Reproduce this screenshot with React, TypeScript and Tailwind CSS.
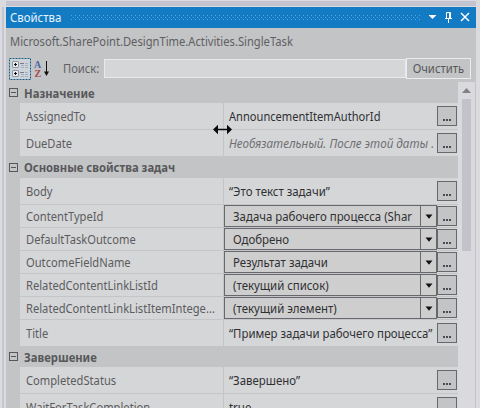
import React from "react";

type Kind = "text" | "combo" | "hint";
type Item = { name: string; value: string; kind?: Kind; valueCls?: string };

const cyr = "scale-x-[.952]";
const lat = "scale-x-[.93]";

function Dots({ cls = "" }: { cls?: string }) {
  return (
    <button className={`flex h-5 w-5 shrink-0 items-start justify-center gap-px border border-[#66686b] bg-[#c2c4c6] pt-[12px] ${cls}`}>
      <span className="h-[2px] w-[2px] bg-[#4a4c55]" />
      <span className="h-[2px] w-[2px] bg-[#4a4c55]" />
      <span className="h-[2px] w-[2px] bg-[#4a4c55]" />
    </button>
  );
}

function Row({ item, last }: { item: Item; last?: boolean }) {
  const combo = item.kind === "combo";
  return (
    <div className={`flex shrink-0 ${combo ? "h-[23px]" : last ? "h-[26px]" : "h-[27px]"} ${last ? "" : "border-b border-[#c3c5c8]"} bg-[#d5d6d8]`}>
      <div className="flex w-[204px] shrink-0 items-center overflow-hidden border-r border-[#c3c5c8] pl-[6px] pt-[2px] text-[#5c5c5e]">
        <span className={`inline-block shrink-0 origin-left ${lat}`}>{item.name}</span>
      </div>
      {combo ? (
        <div className="flex h-[22px] w-[213px] shrink-0 border border-[#66686b] bg-[#cecece] text-[#303033]">
          <div className="flex w-[196px] items-center overflow-hidden border-r border-[#66686b] pl-[8px] pt-[2px]">
            <span className={`inline-block shrink-0 origin-left ${item.valueCls ?? cyr}`}>{item.value}</span>
          </div>
          <div className="flex flex-1 items-center justify-center">
            <svg width="8" height="5" viewBox="0 0 8 5"><path d="M0.5 0.5h7L4 4.7z" fill="#111" /></svg>
          </div>
        </div>
      ) : (
        <div className={`flex w-[213px] shrink-0 items-center overflow-hidden pl-[5px] pt-[2px] ${item.kind === "hint" ? "italic text-[#707074]" : "text-[#303033]"}`}>
          <span className={`inline-block shrink-0 origin-left ${item.valueCls ?? cyr}`}>{item.value}</span>
        </div>
      )}
      <Dots cls={combo ? "mt-px" : "mt-[3px]"} />
    </div>
  );
}

function Group({ title, h, items }: { title: string; h: string; items: Item[] }) {
  return (
    <section className="shrink-0">
      <header className={`flex items-center ${h}`}>
        <span className="ml-[3px] flex h-[9px] w-[9px] items-center justify-center border border-[#55575a]">
          <span className="h-px w-[5px] bg-[#55575a]" />
        </span>
        <span className="ml-[6px] inline-block origin-left scale-x-[.94] pt-[2px] font-bold text-[#58585a]">{title}</span>
      </header>
      <div className="ml-[14px]">
        {items.map((it, i) => (
          <Row key={it.name} item={it} last={i === items.length - 1} />
        ))}
      </div>
    </section>
  );
}

export default function App() {
  return (
    <div className="flex h-[408px] w-[480px] flex-col overflow-hidden whitespace-nowrap bg-[#dadadf] font-['Noto_Sans','Liberation_Sans',sans-serif] text-[12px] leading-4">
      <div className="flex h-[7px] shrink-0 flex-col">
        <div className="h-px bg-[#dadadf]" />
        <div className="ml-[6px] mr-1 h-[5px] bg-[#c3c3cf]" />
      </div>
      <div className="flex min-h-0 flex-1">
        <div className="w-[6px] shrink-0 pl-[2px]"><div className="h-full w-[2px] bg-[#c6c6d2]" /></div>
        <main className="flex w-[470px] flex-col overflow-hidden bg-[#c3c4c6]">
          <div className="flex h-[21px] shrink-0 items-center bg-[#127bc4] text-[#e9f3fa]">
            <span className="w-16 shrink-0 pl-1"><span className="inline-block origin-left scale-x-[.95]">Свойства</span></span>
            <svg width="359" height="6" className="shrink-0" viewBox="64 0 359 6">
              <defs>
                <pattern id="grip" width="4" height="4" patternUnits="userSpaceOnUse">
                  <rect x="1" y="0" width="1" height="1" fill="#55a8df" />
                  <rect x="3" y="2" width="1" height="1" fill="#55a8df" />
                </pattern>
              </defs>
              <rect x="64" width="350" height="5" fill="url(#grip)" />
            </svg>
            <svg width="46" height="21" viewBox="0 0 46 21" className="shrink-0">
              <path d="M-0.5 8h8L3.5 12z" fill="#fff" />
              <path d="M17.5 11.5v-6h4v6M16 11.5h7M19.5 12v4M20.5 5.5v6" fill="none" stroke="#fff" />
              <path d="M32 6l8 8M40 6l-8 8" stroke="#fff" strokeWidth="1.5" />
            </svg>
          </div>
          <div className="flex h-[28px] shrink-0 items-center pl-1 text-[#606062]"><span className="inline-block origin-left scale-x-[.932]">Microsoft.SharePoint.DesignTime.Activities.SingleTask</span></div>
          <div className="flex h-[26px] shrink-0 items-start pt-[2px]">
            <svg width="44" height="22" viewBox="0 0 44 22" className="ml-[3px] shrink-0">
              <rect x="0.5" y="0.5" width="21" height="21" fill="#cdd3d8" />
              <rect x="0.5" y="0.5" width="21" height="21" fill="none" stroke="#1b5f88" strokeDasharray="2 1" />
              <g fill="#e8eaec" stroke="#8b98a5"><rect x="3.5" y="3.5" width="6" height="6" rx="0.5" /><rect x="3.5" y="12.5" width="6" height="6" rx="0.5" /></g>
              <path d="M5 6.5h3M6.5 5v3M5 15.5h3M6.5 14v3" stroke="#111" />
              <path d="M11 5.5h4M11 14.5h4" stroke="#777c88" />
              <path d="M12 7.5h3M16 5.5h3M16 7.5h3M12 9.5h3M16 9.5h3M12 16.5h3M16 14.5h3M16 16.5h3M12 18.5h3M16 18.5h3" stroke="#a3b1c2" />
              <text x="25" y="10" fontFamily="Liberation Serif" fontWeight="bold" fontSize="10" fill="#4a68a3">A</text>
              <text x="25.5" y="18.5" fontFamily="Liberation Serif" fontWeight="bold" fontSize="10" fill="#a84850">Z</text>
              <path d="M37.5 3v12" stroke="#111" /><path d="M35 13.5h5L37.5 18z" fill="#111" />
            </svg>
            <span className="w-[51px] shrink-0 pl-[10px] pt-[3px] text-[#606062]"><span className="inline-block origin-left scale-x-[.93]">Поиск:</span></span>
            <div className="mt-px h-[19px] w-[302px] shrink-0 border border-[#e8e9eb] bg-[#d5d6d8]" />
            <button className="flex h-[21px] w-[65px] items-center justify-center border border-[#ececee] pt-px text-[#58585a]"><span className="inline-block scale-x-[.94]">Очистить</span></button>
          </div>
          <div className="flex min-h-0 flex-1">
            <div className="flex w-[452px] shrink-0 flex-col overflow-hidden">
              <Group title="Назначение" h="h-[21px]" items={[
                { name: "AssignedTo", value: "AnnouncementItemAuthorId", valueCls: "scale-x-[.925]" },
                { name: "DueDate", value: "Необязательный. После этой даты .", kind: "hint", valueCls: "scale-x-[.972]" },
              ]} />
              <Group title="Основные свойства задач" h="h-[22px]" items={[
                { name: "Body", value: "“Это текст задачи”" },
                { name: "ContentTypeId", value: "Задача рабочего процесса (Shar", kind: "combo" },
                { name: "DefaultTaskOutcome", value: "Одобрено", kind: "combo" },
                { name: "OutcomeFieldName", value: "Результат задачи", kind: "combo" },
                { name: "RelatedContentLinkListId", value: "(текущий список)", kind: "combo" },
                { name: "RelatedContentLinkListItemIntege...", value: "(текущий элемент)", kind: "combo" },
                { name: "Title", value: "“Пример задачи рабочего процесса”" },
              ]} />
              <Group title="Завершение" h="h-[21px]" items={[
                { name: "CompletedStatus", value: "“Завершено”" },
                { name: "WaitForTaskCompletion", value: "true" },
              ]} />
            </div>
            <div className="flex w-[17px] shrink-0 flex-col items-center bg-[#d9d9de] pt-[6px]">
              <svg width="9" height="5" viewBox="0 0 9 5"><path d="M0 5L4.5 0L9 5z" fill="#808086" /></svg>
              <div className="mt-[6px] h-[152px] w-[9px] bg-[#c2c3ca]" />
            </div>
          </div>
        </main>
      </div>
      <svg width="20" height="11" viewBox="0 0 20 11" className="absolute left-[213px] top-[124px]">
        <path d="M0 5.5L5 0.8V4.8H14V0.8L19 5.5L14 10.2V6.2H5V10.2z" fill="#0a0a0a" />
      </svg>
    </div>
  );
}
